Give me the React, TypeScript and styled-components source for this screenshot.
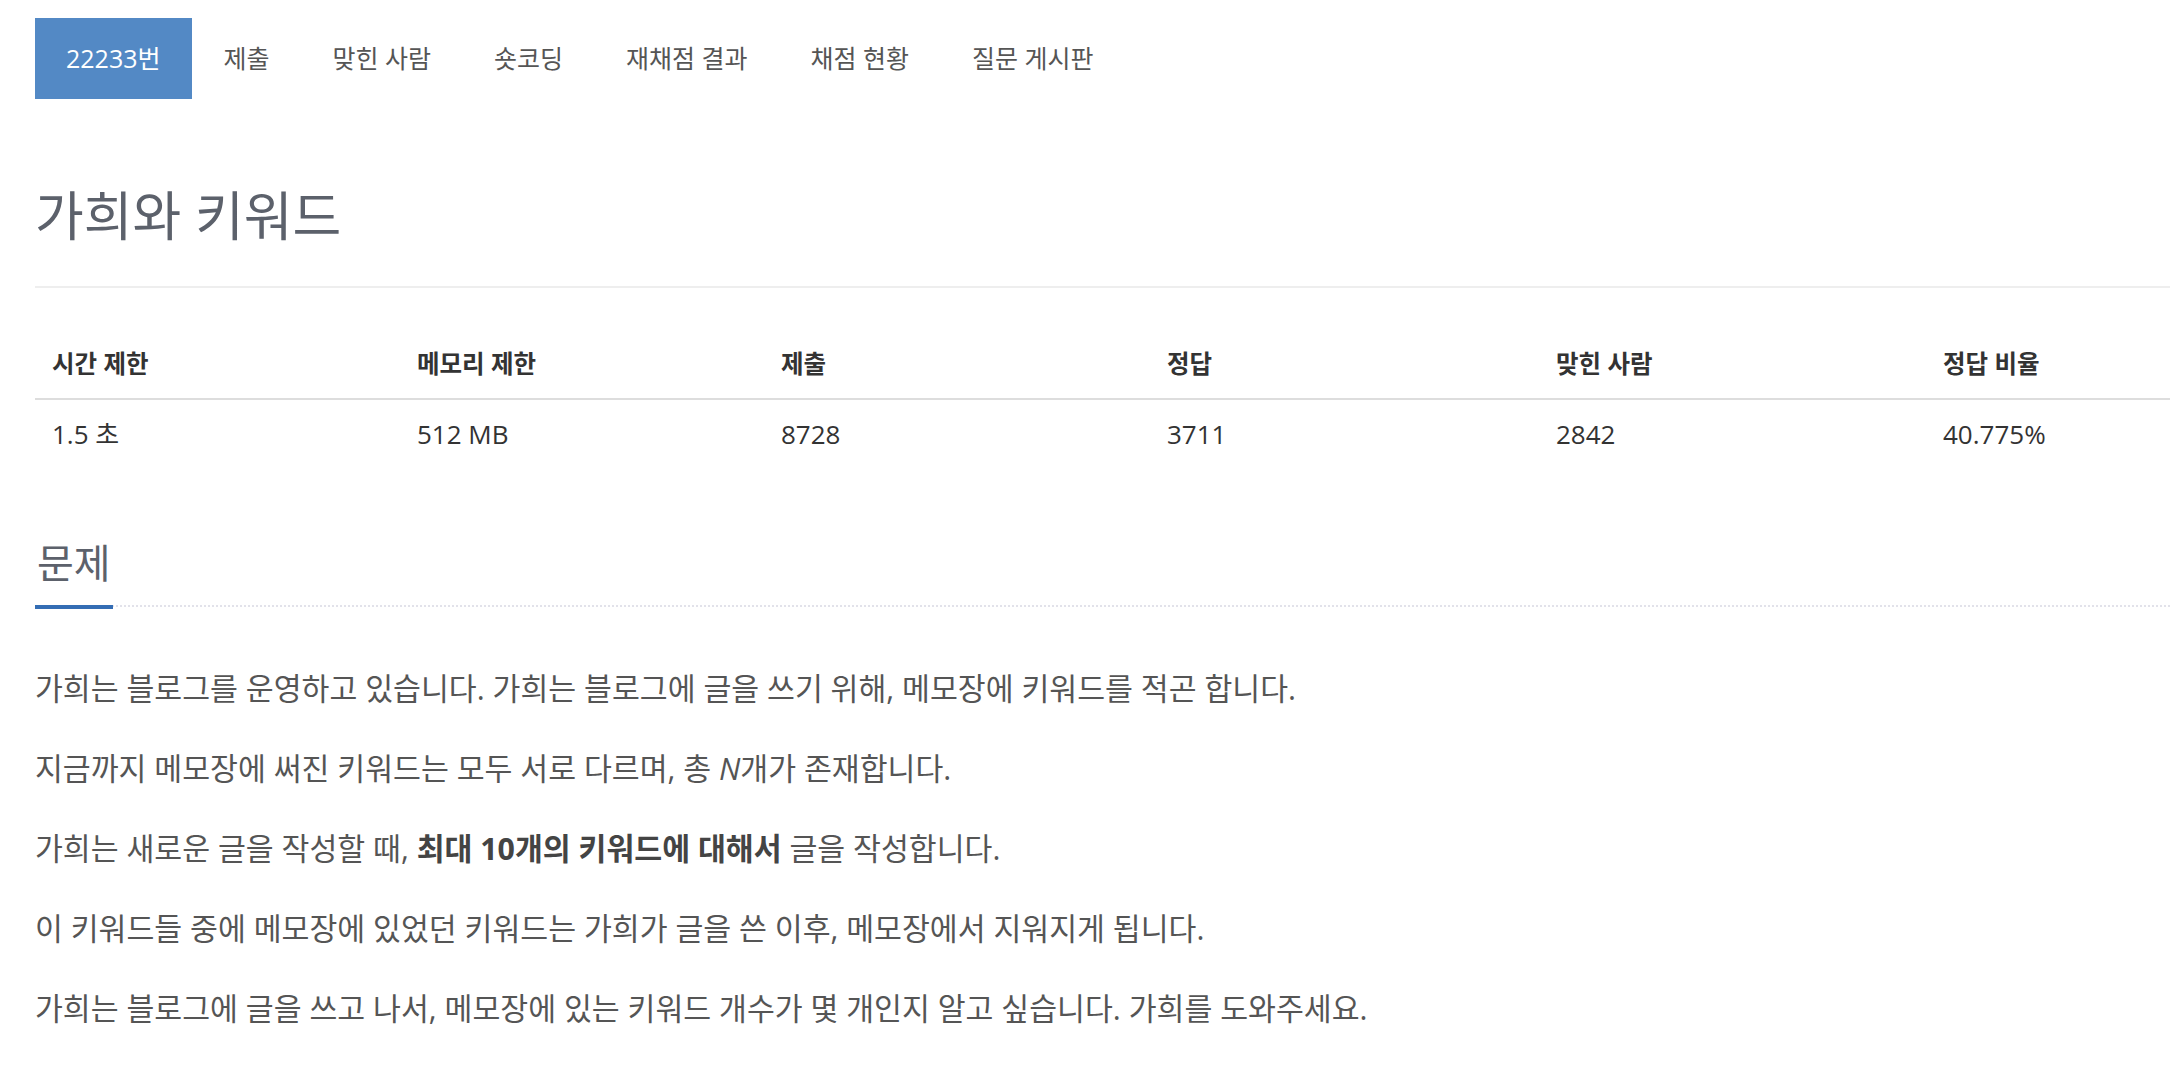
import styled, { createGlobalStyle } from "styled-components";

const GlobalStyle = createGlobalStyle`
  html, body {
    margin: 0;
    padding: 0;
    background: #ffffff;
  }
  body {
    font-family: "Open Sans", "Noto Sans CJK KR", sans-serif;
    color: #555;
    overflow: hidden;
  }
`;

const tabs = ["22233번", "제출", "맞힌 사람", "숏코딩", "재채점 결과", "채점 현황", "질문 게시판"];

const stats = [
  { label: "시간 제한", value: "1.5 초" },
  { label: "메모리 제한", value: "512 MB" },
  { label: "제출", value: "8728" },
  { label: "정답", value: "3711" },
  { label: "맞힌 사람", value: "2842" },
  { label: "정답 비율", value: "40.775%" },
];

const App: React.FC = () => {
  return (
    <>
      <GlobalStyle />
      <Page>
        <TabBar>
          {tabs.map((t, i) => (
            <Tab key={t} $active={i === 0}>
              {t}
            </Tab>
          ))}
        </TabBar>

        <PageHeader>
          <Title>가희와 키워드</Title>
        </PageHeader>

        <InfoTable>
          {stats.map((s) => (
            <HeadCell key={s.label}>{s.label}</HeadCell>
          ))}
          {stats.map((s) => (
            <DataCell key={s.label}>{s.value}</DataCell>
          ))}
        </InfoTable>

        <Headline>
          <SectionTitle>문제</SectionTitle>
        </Headline>

        <ProblemText>
          <p>가희는 블로그를 운영하고 있습니다. 가희는 블로그에 글을 쓰기 위해, 메모장에 키워드를 적곤 합니다.</p>
          <p>
            지금까지 메모장에 써진 키워드는 모두 서로 다르며, 총 <i>N</i>개가 존재합니다.
          </p>
          <p>
            가희는 새로운 글을 작성할 때, <strong>최대 10개의 키워드에 대해서</strong> 글을 작성합니다.
          </p>
          <p>이 키워드들 중에 메모장에 있었던 키워드는 가희가 글을 쓴 이후, 메모장에서 지워지게 됩니다.</p>
          <p>가희는 블로그에 글을 쓰고 나서, 메모장에 있는 키워드 개수가 몇 개인지 알고 싶습니다. 가희를 도와주세요.</p>
        </ProblemText>
      </Page>
    </>
  );
};

export default App;

const Page = styled.div`
  padding: 18px 0 0 35px;
  width: 2135px;
`;

const TabBar = styled.ul`
  display: flex;
  margin: 0;
  padding: 0;
  list-style: none;
`;

const Tab = styled.li<{ $active?: boolean }>`
  height: 81px;
  line-height: 81px;
  padding: 0 32px 0 31px;
  font-size: 25px;
  color: ${(p) => (p.$active ? "#ffffff" : "#555")};
  background: ${(p) => (p.$active ? "#5389c5" : "transparent")};
  white-space: nowrap;
  cursor: pointer;
`;

const PageHeader = styled.div`
  margin-top: 87px;
  padding-bottom: 40px;
  border-bottom: 2px solid #eee;
`;

const Title = styled.h1`
  margin: 0;
  font-size: 53px;
  line-height: 60px;
  font-weight: 400;
  color: #5c616b;
`;

const InfoTable = styled.div`
  display: grid;
  grid-template-columns: 365px 364px 386px 389px 387px 1fr;
  margin-top: 42px;
`;

const HeadCell = styled.div`
  padding: 17px;
  line-height: 34px;
  font-size: 24.5px;
  font-weight: 700;
  color: #333;
  border-bottom: 2px solid #ddd;
  white-space: nowrap;
`;

const DataCell = styled.div`
  padding: 17px;
  line-height: 34px;
  font-size: 26px;
  color: #333;
  white-space: nowrap;
`;

const Headline = styled.div`
  margin-top: 73px;
  border-bottom: 2px dotted #e2e2ea;
`;

const SectionTitle = styled.h2`
  display: inline-block;
  margin: 0 0 -4px;
  padding: 0 2px 20px;
  font-size: 40px;
  line-height: 44px;
  font-weight: 400;
  color: #5c616b;
  border-bottom: 4px solid #346db4;
`;

const ProblemText = styled.div`
  margin-top: 59px;
  font-size: 30.3px;
  line-height: 45px;
  color: #555;

  p {
    margin: 0 0 35px;
    white-space: nowrap;
  }

  strong {
    font-weight: 700;
    color: #444;
  }
`;
